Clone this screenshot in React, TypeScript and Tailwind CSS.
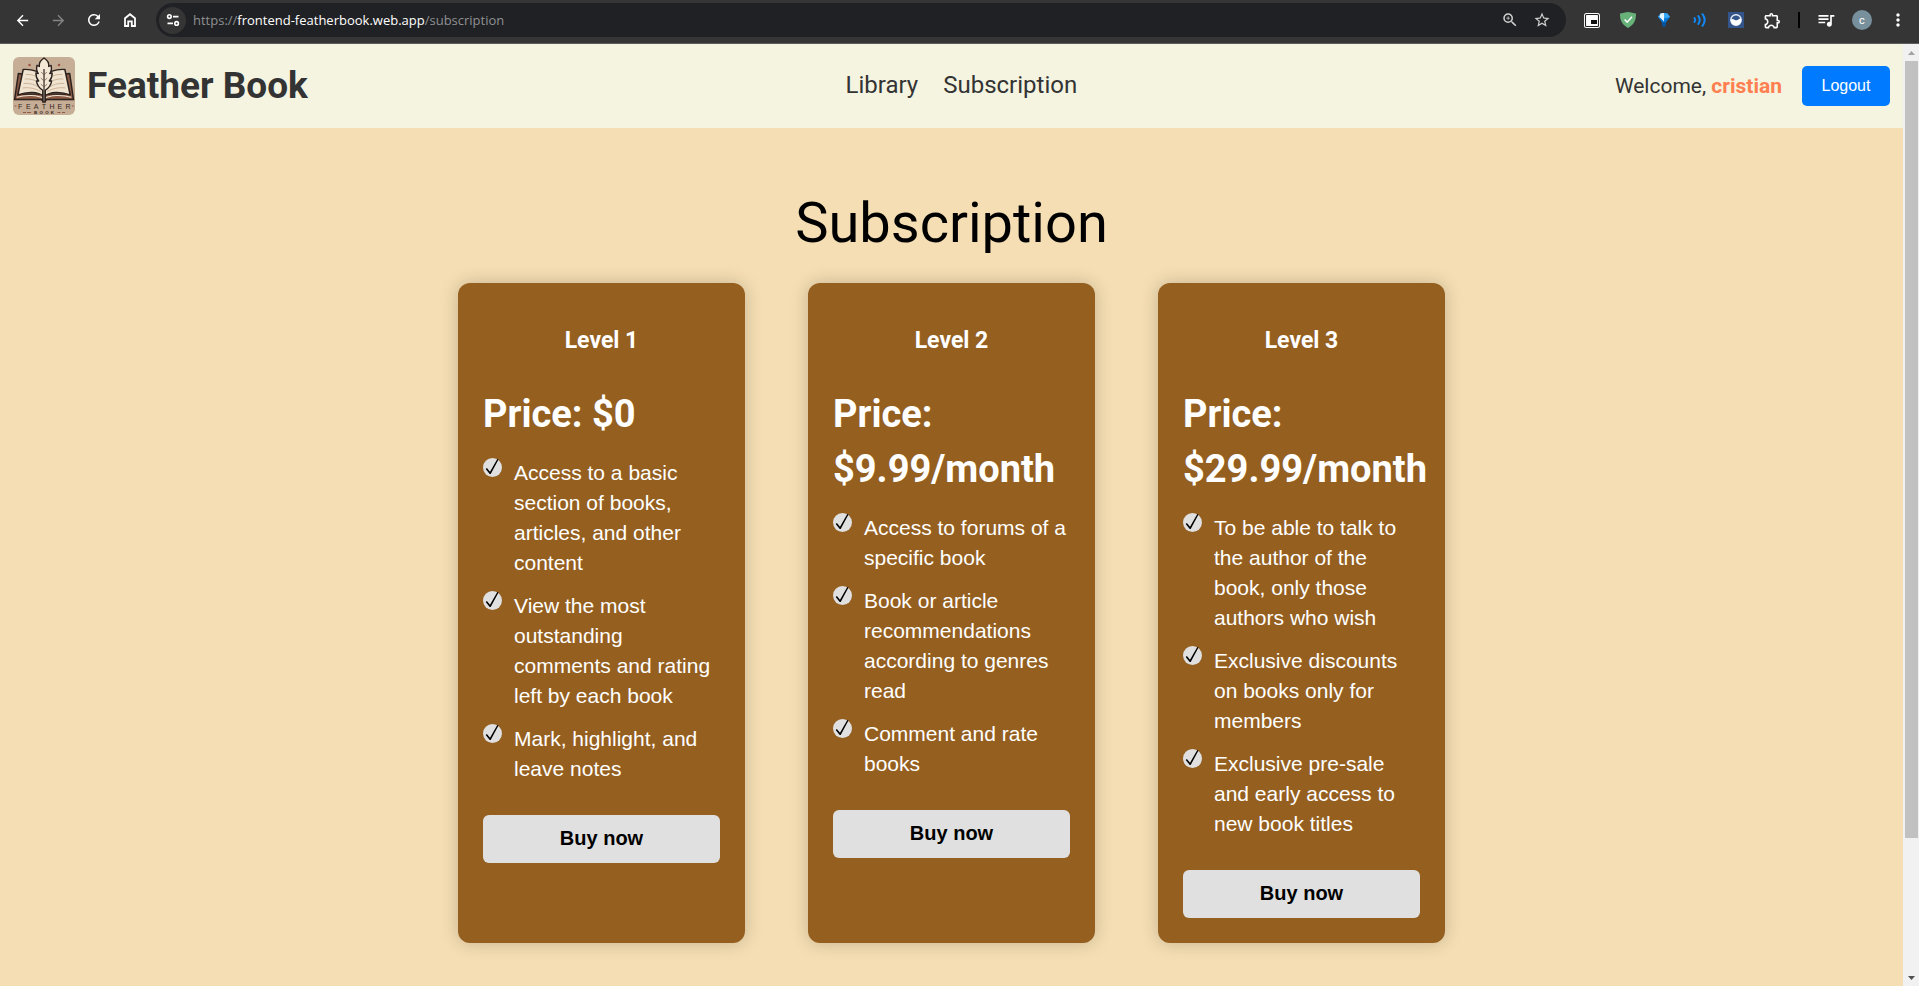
import {
  MdArrowBack,
  MdArrowForward,
  MdMoreVert,
  MdOutlineExtension,
  MdQueueMusic,
  MdRefresh,
  MdStarBorder,
  MdZoomIn,
} from "react-icons/md";
import type { ReactNode } from "react";

type Plan = { name: string; price: string; features: string[] };

const plans: Plan[] = [
  {
    name: "Level 1",
    price: "Price: $0",
    features: [
      "Access to a basic section of books, articles, and other content",
      "View the most outstanding comments and rating left by each book",
      "Mark, highlight, and leave notes",
    ],
  },
  {
    name: "Level 2",
    price: "Price: $9.99/month",
    features: [
      "Access to forums of a specific book",
      "Book or article recommendations according to genres read",
      "Comment and rate books",
    ],
  },
  {
    name: "Level 3",
    price: "Price: $29.99/month",
    features: [
      "To be able to talk to the author of the book, only those authors who wish",
      "Exclusive discounts on books only for members",
      "Exclusive pre-sale and early access to new book titles",
    ],
  },
];

function ToolButton({ label, className = "h-9", children }: { label: string; className?: string; children: ReactNode }) {
  return (
    <button type="button" aria-label={label} className={`flex w-9 shrink-0 items-center justify-center ${className}`}>
      {children}
    </button>
  );
}

function HomeIcon() {
  return (
    <svg viewBox="0 0 14 16" className="h-4 w-3.5" fill="none" stroke="currentColor" strokeWidth="1.8">
      <path d="M2 6.300 7 2.200 12 6.300V14H8.800V9.300H5.200V14H2z" />
    </svg>
  );
}

function SiteInfoIcon() {
  return (
    <svg viewBox="0 0 14 14" className="size-3.5" fill="none" stroke="currentColor" strokeWidth="1.6">
      <circle cx="3.4" cy="3.6" r="1.8" />
      <path d="M7 3.6h5.5M1.5 10.4H7" />
      <circle cx="10.6" cy="10.4" r="1.8" />
    </svg>
  );
}

function BrowserBar() {
  return (
    <div className="flex h-11 items-start border-b border-[#5c5c5c] bg-[#353535] pt-[3px] pr-[3px] pl-1 text-white">
      <ToolButton label="Back" className="h-[34px]">
        <MdArrowBack size={17} />
      </ToolButton>
      <ToolButton label="Forward" className="h-[34px] text-[#858585]">
        <MdArrowForward size={17} />
      </ToolButton>
      <ToolButton label="Reload" className="h-[34px]">
        <MdRefresh size={18} />
      </ToolButton>
      <ToolButton label="Home" className="h-[34px]">
        <HomeIcon />
      </ToolButton>
      <div className="mr-2 ml-2 flex h-[34px] flex-1 items-center rounded-full bg-[#202124] pr-2 pl-[3px]">
        <button
          type="button"
          aria-label="Site information"
          className="flex size-[27px] items-center justify-center rounded-full bg-[#353535]"
        >
          <SiteInfoIcon />
        </button>
        <a
          href="https://frontend-featherbook.web.app/subscription"
          className="ml-[7px] flex-1 font-['Open_Sans',sans-serif] text-[13px] leading-5 text-[#8f9092]"
        >
          https://<span className="text-white">frontend-featherbook.web.app</span>/subscription
        </a>
        <button type="button" aria-label="Zoom" className="flex w-8 justify-center text-[#d0d0d0]">
          <MdZoomIn size={18} />
        </button>
        <button type="button" aria-label="Bookmark" className="flex w-8 justify-center text-[#d0d0d0]">
          <MdStarBorder size={18} />
        </button>
      </div>
      <ToolButton label="Picture in picture" className="h-[34px]">
        <svg viewBox="0 0 16 15" className="h-[15px] w-4">
          <rect width="16" height="15" rx="2.500" fill="#fff" />
          <rect x="1.500" y="1.500" width="13" height="12" rx="1" fill="#fff" stroke="#222" strokeWidth="1.100" />
          <rect x="7" y="7" width="6" height="4" fill="#111" />
        </svg>
      </ToolButton>
      <ToolButton label="Ad blocker" className="h-[34px]">
        <svg viewBox="0 0 16 16" className="size-4">
          <path d="M8 0C10.500 .3 13.500 1 16 1.600 16 8 14.500 12.500 8 16 1.500 12.500 0 8 0 1.600 2.500 1 5.500.3 8 0z" fill="#67b279" />
          <path d="m4.600 7.400 2.600 2.800 4.800-5.400" fill="none" stroke="#fff" strokeWidth="1.500" />
        </svg>
      </ToolButton>
      <ToolButton label="Diamond extension" className="h-[34px]">
        <svg viewBox="0 0 12 14" className="h-3.5 w-3">
          <path d="M2.500.500 6 0l3.500.500L12 4 7.800 9.500v3L6 14l-1.800-1.500v-3L0 4z" fill="#0878d8" />
          <path d="M2.500.500 6 0l3.500.500L12 4 6 5.500 0 4z" fill="#3aa9f5" />
          <path d="M2.500.500 6 0v8.500L1.500 4z" fill="#e6f5ff" />
          <path d="M4.200 9.500h3.600v3L6 14l-1.800-1.500z" fill="#064f94" />
        </svg>
      </ToolButton>
      <ToolButton label="Sound extension" className="h-[34px]">
        <svg viewBox="0 0 14 14" className="size-3.5" fill="none" stroke="#1189f5" strokeWidth="2" strokeLinecap="round">
          <path d="M1.500 5q1.400 2 0 4M5.300 3q2.800 4 0 8M9.500 1.200q4.400 5.800 0 11.600" />
        </svg>
      </ToolButton>
      <ToolButton label="Wave extension" className="h-[34px]">
        <svg viewBox="0 0 16 16" className="size-4">
          <rect width="16" height="16" fill="#34558b" />
          <circle cx="8" cy="8" r="5.200" fill="#34558b" stroke="#e9eef6" strokeWidth="1.400" />
          <path d="M2.800 7.600C5 5.600 7 8.800 9 8.200 10.800 7.600 11.500 5.600 13.200 6.800 13.600 11 11 13.300 8 13.300 5 13.300 2.600 11 2.800 7.600z" fill="#fff" />
        </svg>
      </ToolButton>
      <ToolButton label="Extensions" className="h-[34px]">
        <MdOutlineExtension size={19} />
      </ToolButton>
      <div className="flex h-[34px] w-[18px] items-center justify-center">
        <span className="h-4 w-0.5 bg-black" />
      </div>
      <ToolButton label="Media controls" className="h-[34px]">
        <MdQueueMusic size={20} />
      </ToolButton>
      <ToolButton label="Profile" className="h-[34px]">
        <span className="flex size-5 items-center justify-center rounded-full bg-[#78909c] font-['Roboto',sans-serif] text-[11px] leading-none">
          c
        </span>
      </ToolButton>
      <ToolButton label="Menu" className="h-[34px]">
        <MdMoreVert size={20} />
      </ToolButton>
    </div>
  );
}

function FeatherLogo() {
  return (
    <svg viewBox="0 0 62 58" className="h-[58px] w-[62px] shrink-0 rounded-md" role="img" aria-label="Feather Book logo">
      <rect width="62" height="58" fill="#c6ae96" />
      <path d="M0 34 5 20h52l5 14v10H0z" fill="#b1957c" opacity=".35" />
      <g transform="scale(1.070 1)">
        <path d="M5 16.500 1.500 42.500h24.500l3 1.500 3-1.500h24.500L53 16.500l-4 .5v20H9V17z" fill="#8b5b46" stroke="#2b211d" strokeWidth="1.400" strokeLinejoin="round" />
        <path d="M9.500 12.500C17 12 24 14 29 19.500v20C23 34 13 34.500 4.500 38z" fill="#f0e3cf" stroke="#2b211d" strokeWidth="1.400" strokeLinejoin="round" />
        <path d="M48.500 12.500C41 12 34 14 29 19.500v20c6-5.500 16-5 24.500-1.500z" fill="#f0e3cf" stroke="#2b211d" strokeWidth="1.400" strokeLinejoin="round" />
        <g fill="none" stroke="#c2a283" strokeWidth=".7">
          <path d="M12 17.500c5-.5 9 1 12 4M11 22c5-.5 10 1 14 4.500M10 26.500c6-.5 11 1 15 4.500M9 31c6-1 12 .5 17 3.500" />
          <path d="M46 17.500c-5-.5-9 1-12 4M47 22c-5-.5-10 1-14 4.500M48 26.500c-6-.5-11 1-15 4.500M49 31c-6-1-12 .5-17 3.500" />
        </g>
        <path d="M3.500 40.300c9-2.800 19.500-2.300 25.500 1.200 6-3.500 16.500-4 25.500-1.200" fill="none" stroke="#f0e3cf" strokeWidth="1" />
        <path
          d="M29 1c-3.500 2.400-4.800 5.400-4.400 8.500l-2.200-1.200c-.7 3.400-.2 6 1.200 8.200l-2.200-.5c0 3.200.8 5.900 2.600 8l-2.100-.2c.4 4 2.600 7.200 5.900 9.500V45h2.400V33.300c3.300-2.300 5.500-5.500 5.900-9.500l-2.100.2c1.800-2.100 2.600-4.800 2.600-8l-2.200.5c1.400-2.200 1.900-4.800 1.200-8.200l-2.200 1.200C33.800 6.400 32.500 3.400 29 1z"
          fill="#f3e8d6"
          stroke="#2b211d"
          strokeWidth="1.300"
          strokeLinejoin="round"
        />
        <path d="M29 12v33" fill="none" stroke="#2b211d" strokeWidth="1.100" />
        <path d="M29 18l-2.600-3M29 18l2.600-3M29 24l-3-3M29 24l3-3M29 30l-3-3M29 30l3-3" fill="none" stroke="#6b5546" strokeWidth=".7" />
      </g>
      <circle cx="16.500" cy="8" r="1.300" fill="#9b5a46" />
      <circle cx="46" cy="8" r="1.300" fill="#9b5a46" />
      <text y="51.500" fontFamily="Liberation Sans, sans-serif" fontSize="7" fill="#33231c">
        {["F", "E", "A", "T", "H", "E", "R"].map((letter, i) => (
          <tspan key={i} x={5 + i * 7.9}>
            {letter}
          </tspan>
        ))}
      </text>
      <path d="M1.500 49h2M58.800 49h2M10 55.500h3M14 55.500h4M44.500 55.500h3M49 55.500h3" stroke="#8b4f3d" strokeWidth=".9" />
      <text y="57" fontFamily="Liberation Sans, sans-serif" fontSize="4.400" fontWeight="700" fill="#33231c">
        {["B", "O", "O", "K"].map((letter, i) => (
          <tspan key={i} x={21 + i * 5.6}>
            {letter}
          </tspan>
        ))}
      </text>
    </svg>
  );
}

function SiteHeader() {
  return (
    <header className="flex h-21 items-center justify-between bg-[#f4f4e1] px-[13px] font-['Roboto',sans-serif] text-[#333333]">
      <div className="flex items-center gap-3">
        <FeatherLogo />
        <span className="pb-0.5 text-[37px] leading-none font-bold">Feather Book</span>
      </div>
      <nav className="flex items-center gap-[25px] pb-0.5 text-[24px] leading-none">
        <a href="#library">Library</a>
        <a href="#subscription">Subscription</a>
      </nav>
      <div className="flex items-center gap-5">
        <p className="text-[21px] leading-none">
          Welcome, <strong className="font-bold text-[#ff7f50]">cristian</strong>
        </p>
        <button
          type="button"
          className="h-10 w-[88px] rounded-[5px] bg-[#007bff] font-['Liberation_Sans',Arial,sans-serif] text-base text-white"
        >
          Logout
        </button>
      </div>
    </header>
  );
}

function CheckBadge() {
  return (
    <svg viewBox="0 0 19 19" className="size-[19px] shrink-0" aria-hidden="true">
      <circle cx="9.500" cy="9.500" r="9.500" fill="#e0e0e0" />
      <path d="M2.700 10.900 3.900 9.900 7 13.700 14.300 1.100 15.500 1.600 7.700 15.900H6.700z" fill="#000" />
    </svg>
  );
}

function PlanCard({ plan }: { plan: Plan }) {
  return (
    <article className="w-[287px] rounded-xl bg-[#955f20] px-[25px] pt-[43px] pb-[25px] text-white shadow-[0_0_18px_rgba(0,0,0,0.2)]">
      <h2 className="text-center font-['Roboto',sans-serif] text-[23px] leading-[30px] font-bold">{plan.name}</h2>
      <p className="mt-[31px] font-['Roboto',sans-serif] text-[38px] leading-[55px] font-bold">{plan.price}</p>
      <ul className="mt-4 flex flex-col gap-[13px]">
        {plan.features.map((feature) => (
          <li key={feature} className="flex gap-3 text-[21px] leading-[30px]">
            <CheckBadge />
            <span>{feature}</span>
          </li>
        ))}
      </ul>
      <button type="button" className="mt-[31px] h-12 w-full rounded-md bg-[#e0e0e0] pb-0.5 text-[20px] font-bold text-black">
        Buy now
      </button>
    </article>
  );
}

function PageScrollbar() {
  return (
    <div className="flex w-4 shrink-0 flex-col items-center bg-[#f1f1f1]" aria-hidden="true">
      <svg viewBox="0 0 16 17" className="h-[17px] w-4">
        <path d="M5 11h7L8.500 7z" fill="#a3a3a3" />
      </svg>
      <div className="w-[13px] basis-[777px] bg-[#c1c1c1]" />
      <div className="flex-1" />
      <svg viewBox="0 0 16 17" className="h-[17px] w-4">
        <path d="M5 7h7l-3.500 4z" fill="#505050" />
      </svg>
    </div>
  );
}

export default function App() {
  return (
    <div className="flex min-h-screen flex-col font-['Liberation_Sans',Arial,sans-serif]">
      <BrowserBar />
      <div className="flex flex-1">
        <div className="flex min-w-0 flex-1 flex-col bg-[#f5deb3]">
          <SiteHeader />
          <main className="flex flex-col items-center pt-[63px] pb-10">
            <h1 className="font-['Roboto',sans-serif] text-[56px] leading-[64px] text-black">Subscription</h1>
            <div className="mt-7 flex flex-wrap justify-center gap-[63px]">
              {plans.map((plan) => (
                <PlanCard key={plan.name} plan={plan} />
              ))}
            </div>
          </main>
        </div>
        <PageScrollbar />
      </div>
    </div>
  );
}
